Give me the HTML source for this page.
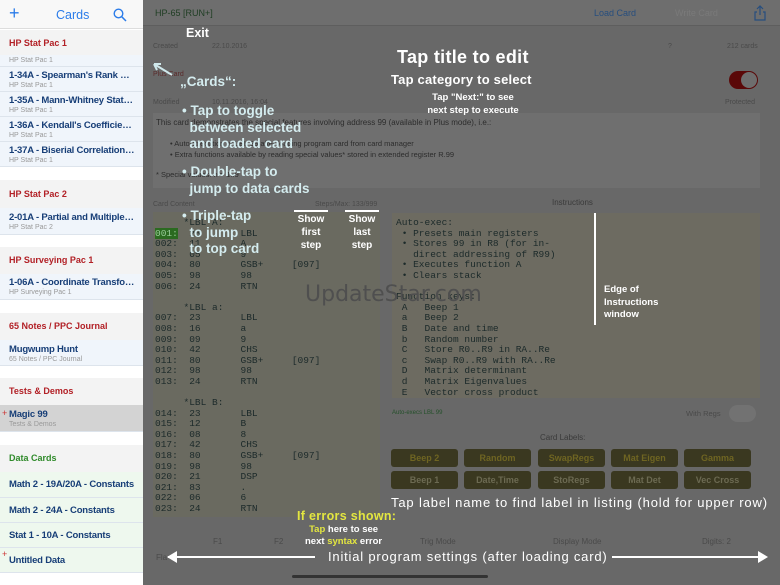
<!DOCTYPE html>
<html><head><meta charset="utf-8"><style>
*{margin:0;padding:0;box-sizing:border-box}
body{width:780px;height:585px;overflow:hidden;position:relative;font-family:"Liberation Sans",sans-serif;background:#686868}
.a{position:absolute;white-space:nowrap}
#side{position:absolute;left:0;top:0;width:143px;height:585px;background:#fff;overflow:hidden}
.sec{position:absolute;left:0;width:143px;background:#f3f3f3;font-weight:bold;font-size:9px;color:#b22026;padding-left:9px}
.it{position:absolute;left:0;width:143px;background:#f0f5fb;border-bottom:1px solid #dde4ec;padding-left:9px;padding-right:8px;font-weight:bold;font-size:9.5px;letter-spacing:-0.2px;color:#173e77;overflow:hidden;white-space:nowrap;text-overflow:ellipsis;line-height:11px}
.it small{display:block;font-weight:normal;font-size:7px;color:#999;letter-spacing:0;line-height:9px}
.dc{background:#eef8ee}
.m{font-family:"Liberation Mono",monospace;font-size:9.5px;color:#1c2a2a;line-height:10.6px;white-space:pre}
.w{color:#fff;font-weight:bold}
.c{color:#d4ecef;font-size:13.5px;font-weight:bold}
.btn{position:absolute;width:67px;height:18px;background:#3a3820;border-radius:3px;color:#6f6522;font-size:9px;font-weight:bold;text-align:center;line-height:18px}
.g{color:#4a4a4a;font-size:7px}
</style></head><body>
<div id="side">
<div class="a" style="left:0;top:0;width:143px;height:29px;background:#f8f8f8;border-bottom:1px solid #ddd"></div>
<div class="a" style="left:9px;top:3px;font-size:18px;color:#2b7ce9">+</div>
<div class="a" style="left:56px;top:8px;font-size:12.5px;color:#2b7ce9">Cards</div>
<svg class="a" style="left:113px;top:8px" width="14" height="14"><circle cx="5.5" cy="5.5" r="4.3" fill="none" stroke="#2b7ce9" stroke-width="1.4"/><line x1="8.7" y1="8.7" x2="13" y2="13" stroke="#2b7ce9" stroke-width="1.5"/></svg>
<div class="sec" style="top:30px;height:25px;line-height:27px">HP Stat Pac 1</div>
<div class="it" style="top:55px;height:12px"><small style="line-height:12px">HP Stat Pac 1</small></div>
<div class="it" style="top:67px;height:25px;padding-top:3px">1-34A - Spearman's Rank C…<small>HP Stat Pac 1</small></div>
<div class="it" style="top:92px;height:25px;padding-top:3px">1-35A - Mann-Whitney Stati…<small>HP Stat Pac 1</small></div>
<div class="it" style="top:117px;height:25px;padding-top:3px">1-36A - Kendall's Coefficien…<small>HP Stat Pac 1</small></div>
<div class="it" style="top:142px;height:25px;padding-top:3px">1-37A - Biserial Correlation…<small>HP Stat Pac 1</small></div>
<div class="sec" style="top:180px;height:28px;line-height:28px">HP Stat Pac 2</div>
<div class="it" style="top:208px;height:27px;padding-top:4px">2-01A - Partial and Multiple…<small>HP Stat Pac 2</small></div>
<div class="sec" style="top:247px;height:27px;line-height:27px">HP Surveying Pac 1</div>
<div class="it" style="top:274px;height:26px;padding-top:3px">1-06A - Coordinate Transfor…<small>HP Surveying Pac 1</small></div>
<div class="sec" style="top:313px;height:27px;line-height:27px">65 Notes / PPC Journal</div>
<div class="it" style="top:340px;height:26px;padding-top:4px">Mugwump Hunt<small>65 Notes / PPC Journal</small></div>
<div class="sec" style="top:378px;height:27px;line-height:27px">Tests &amp; Demos</div>
<div class="it" style="top:405px;height:27px;padding-top:4px;background:#d3d3d3">Magic 99<small>Tests &amp; Demos</small></div>
<div class="a" style="left:2px;top:408px;font-size:9px;color:#c33">+</div>
<div class="sec" style="top:445px;height:27px;line-height:27px;color:#2f8a2a">Data Cards</div>
<div class="it dc" style="top:472px;height:26px;line-height:26px">Math 2 - 19A/20A - Constants</div>
<div class="it dc" style="top:498px;height:25px;line-height:25px">Math 2 - 24A - Constants</div>
<div class="it dc" style="top:523px;height:25px;line-height:25px">Stat 1 - 10A - Constants</div>
<div class="it dc" style="top:548px;height:25px;line-height:25px">Untitled Data</div>
<div class="a" style="left:2px;top:549px;font-size:9px;color:#c33">+</div>
</div>
<!-- main -->
<div class="a" style="left:143px;top:0;width:637px;height:26px;background:#6e6e6e;border-bottom:1px solid #5e5e5e"></div>
<div class="a" style="left:155px;top:8px;font-size:9px;color:#1e3d22">HP-65 [RUN+]</div>
<div class="a" style="left:594px;top:8px;font-size:9px;color:#274e7e">Load Card</div>
<div class="a" style="left:675px;top:8px;font-size:9px;color:#7a7a7a">Write Card</div>
<svg class="a" style="left:753px;top:5px" width="14" height="16"><path d="M7 1V10M4 4L7 1L10 4M4 7H2V15H12V7H10" fill="none" stroke="#274e7e" stroke-width="1.2"/></svg>
<div class="a g" style="left:153px;top:43px">Created</div><div class="a g" style="left:212px;top:43px">22.10.2016</div>
<div class="a g" style="left:668px;top:43px">?</div><div class="a g" style="left:727px;top:43px">212 cards</div>
<div class="a g" style="left:153px;top:71px;color:#5a2a2a">Plus Card</div>
<div class="a g" style="left:153px;top:99px">Modified</div><div class="a g" style="left:212px;top:99px">10.11.2016, 16:04</div>
<div class="a" style="left:729px;top:71px;width:29px;height:18px;border-radius:9px;background:#5a0808"></div>
<div class="a" style="left:741px;top:72px;width:16px;height:16px;border-radius:8px;background:#6e6e6e"></div>
<div class="a g" style="left:725px;top:99px">Protected</div>
<div class="a" style="left:153px;top:113px;width:607px;height:75px;background:#6f6f6f"></div>
<div class="a" style="left:156px;top:118px;font-size:8px;color:#2c2c2c">This card demonstrates the special features involving address 99 (available in Plus mode), i.e.:</div>
<div class="a" style="left:170px;top:139px;font-size:7.5px;color:#2c2c2c">• Auto-execution of LBL 99 after loading program card from card manager</div>
<div class="a" style="left:170px;top:150px;font-size:7.5px;color:#2c2c2c">• Extra functions available by reading special values* stored in extended register R.99</div>
<div class="a" style="left:156px;top:170px;font-size:7.5px;color:#2c2c2c">* Special values: n = 1..9</div>
<div class="a g" style="left:153px;top:201px">Card Content</div>
<div class="a g" style="left:315px;top:201px">Steps/Max: 133/999</div>
<div class="a" style="left:552px;top:198px;font-size:8px;color:#3a3a3a">Instructions</div>
<div class="a" style="left:153px;top:212px;width:227px;height:305px;background:#6a6a60"></div>
<div class="a" style="left:392px;top:213px;width:368px;height:185px;background:#6d6b61"></div>
<pre class="a m" style="left:155px;top:218px">     *LBL A:
<span style="background:#2b6a20;color:#9c9">001:</span>  23       LBL
002:  11       A
003:  05       9
004:  80       GSB+     [097]
005:  98       98
006:  24       RTN

     *LBL a:
007:  23       LBL
008:  16       a
009:  09       9
010:  42       CHS
011:  80       GSB+     [097]
012:  98       98
013:  24       RTN

     *LBL B:
014:  23       LBL
015:  12       B
016:  08       8
017:  42       CHS
018:  80       GSB+     [097]
019:  98       98
020:  21       DSP
021:  83       .
022:  06       6
023:  24       RTN</pre>
<pre class="a m" style="left:396px;top:218px">Auto-exec:
 • Presets main registers
 • Stores 99 in R8 (for in-
   direct addressing of R99)
 • Executes function A
 • Clears stack

Function keys:
 A   Beep 1
 a   Beep 2
 B   Date and time
 b   Random number
 C   Store R0..R9 in RA..Re
 c   Swap R0..R9 with RA..Re
 D   Matrix determinant
 d   Matrix Eigenvalues
 E   Vector cross product</pre>
<div class="a" style="left:594px;top:213px;width:2px;height:112px;background:#fff"></div>
<div class="a" style="left:392px;top:410px;font-size:6px;color:#24502a">Auto-execs LBL 99</div>
<div class="a g" style="left:686px;top:409px;font-size:7.5px">With Regs</div>
<div class="a" style="left:729px;top:405px;width:27px;height:17px;border-radius:9px;background:#727272"></div>
<div class="a" style="left:540px;top:433px;font-size:8px;color:#3a3a3a">Card Labels:</div>
<div class="btn" style="left:391px;top:449px">Beep 2</div><div class="btn" style="left:464px;top:449px">Random</div><div class="btn" style="left:538px;top:449px">SwapRegs</div><div class="btn" style="left:611px;top:449px">Mat Eigen</div><div class="btn" style="left:684px;top:449px">Gamma</div>
<div class="btn" style="left:391px;top:471px;color:#6c6a52">Beep 1</div><div class="btn" style="left:464px;top:471px;color:#6c6a52">Date,Time</div><div class="btn" style="left:538px;top:471px;color:#6c6a52">StoRegs</div><div class="btn" style="left:611px;top:471px;color:#6c6a52">Mat Det</div><div class="btn" style="left:684px;top:471px;color:#6c6a52">Vec Cross</div>
<div class="a g" style="left:213px;top:537px;font-size:8px">F1</div><div class="a g" style="left:274px;top:537px;font-size:8px">F2</div>
<div class="a g" style="left:420px;top:537px;font-size:8px">Trig Mode</div><div class="a g" style="left:553px;top:537px;font-size:8px">Display Mode</div><div class="a g" style="left:702px;top:537px;font-size:8px">Digits: 2</div>
<div class="a g" style="left:156px;top:553px;font-size:8px">Fla</div>
<div class="a" style="left:292px;top:575px;width:196px;height:3px;border-radius:2px;background:#333"></div>
<!-- overlay texts -->
<div class="a w" style="left:186px;top:26px;font-size:12.5px">Exit</div>
<svg class="a" style="left:150px;top:60px" width="30" height="20"><path d="M22 15L4 4M4 4L11 4M4 4L7 10" fill="none" stroke="#cfe8ec" stroke-width="2"/></svg>
<div class="a c" style="left:180px;top:74px">„Cards“:</div>
<div class="a c" style="left:182px;top:103px;line-height:16.5px;white-space:pre">• Tap to toggle
  between selected
  and loaded card</div>
<div class="a c" style="left:182px;top:164px;line-height:16.5px;white-space:pre">• Double-tap to
  jump to data cards</div>
<div class="a c" style="left:182px;top:208px;line-height:16.5px;white-space:pre">• Triple-tap
  to jump
  to top card</div>
<div class="a" style="left:294px;top:210px;width:34px;height:2px;background:#fff"></div>
<div class="a" style="left:345px;top:210px;width:34px;height:2px;background:#fff"></div>
<div class="a w" style="left:290px;top:213px;width:42px;text-align:center;font-size:10px;line-height:13px;white-space:pre">Show
first
step</div>
<div class="a w" style="left:341px;top:213px;width:42px;text-align:center;font-size:10px;line-height:13px;white-space:pre">Show
last
step</div>
<div class="a" style="left:305px;top:282px;font-size:22px;color:#4f4f4f;font-family:'DejaVu Sans',sans-serif">UpdateStar.com</div>
<div class="a w" style="left:397px;top:47px;font-size:18px;letter-spacing:0.3px">Tap title to edit</div>
<div class="a w" style="left:391px;top:72px;font-size:13px;letter-spacing:0.2px">Tap category to select</div>
<div class="a w" style="left:400px;top:91px;width:146px;text-align:center;font-size:9.5px;line-height:13px;white-space:normal">Tap "Next:" to see<br>next step to execute</div>
<div class="a w" style="left:604px;top:284px;font-size:9.5px;line-height:12.5px;white-space:pre">Edge of
Instructions
window</div>
<div class="a w" style="left:391px;top:495px;font-size:13px;font-weight:normal;letter-spacing:0.85px">Tap label name to find label in listing (hold for upper row)</div>
<div class="a" style="left:297px;top:509px;font-size:12.5px;color:#e3e640;font-weight:bold;letter-spacing:0.3px">If errors shown:</div>
<div class="a w" style="left:305px;top:524px;font-size:9.5px;line-height:12px;text-align:center;white-space:pre"><span style="color:#e3e640">Tap</span> here to see
next <span style="color:#e3e640">syntax</span> error</div>
<div class="a w" style="left:328px;top:549px;font-size:13px;font-weight:normal;letter-spacing:0.8px">Initial program settings (after loading card)</div>
<svg class="a" style="left:165px;top:549px" width="170" height="16"><path d="M3 8H150" stroke="#fff" stroke-width="2"/><path d="M2 8L12 2V14Z" fill="#fff"/></svg>
<svg class="a" style="left:610px;top:549px" width="160" height="16"><path d="M2 8H148" stroke="#fff" stroke-width="2"/><path d="M158 8L148 2V14Z" fill="#fff"/></svg>
</body></html>
